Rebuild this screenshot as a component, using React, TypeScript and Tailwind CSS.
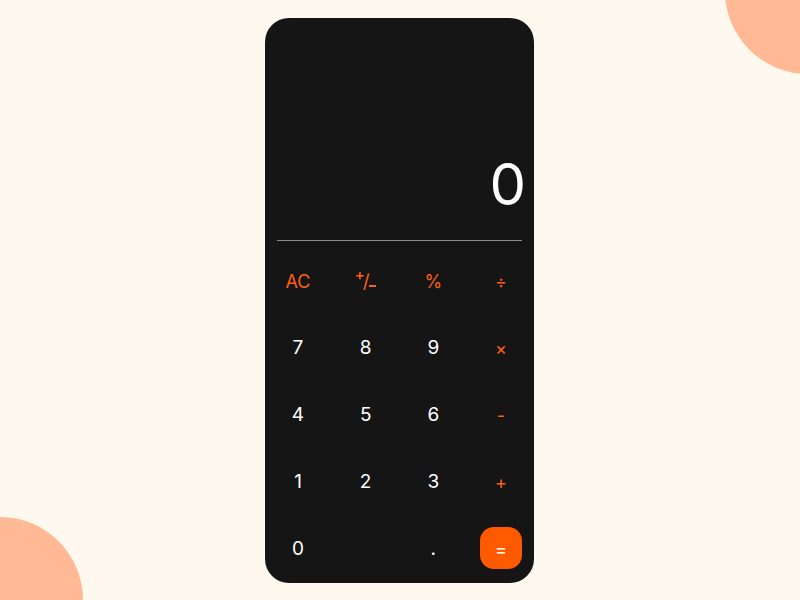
const keys: { label: string; kind: "op" | "num" | "eq" | "empty" }[] = [
  { label: "AC", kind: "op" },
  { label: "pm", kind: "op" },
  { label: "%", kind: "op" },
  { label: "÷", kind: "op" },
  { label: "7", kind: "num" },
  { label: "8", kind: "num" },
  { label: "9", kind: "num" },
  { label: "×", kind: "op" },
  { label: "4", kind: "num" },
  { label: "5", kind: "num" },
  { label: "6", kind: "num" },
  { label: "-", kind: "op" },
  { label: "1", kind: "num" },
  { label: "2", kind: "num" },
  { label: "3", kind: "num" },
  { label: "+", kind: "op" },
  { label: "0", kind: "num" },
  { label: "", kind: "empty" },
  { label: ".", kind: "num" },
  { label: "=", kind: "eq" },
];

// the +/- key: small plus up top, slash, small minus at the bottom
function PlusMinus() {
  return (
    <span className="relative inline-block h-[20px] w-[22px]">
      <span className="absolute left-0 top-[-4px] text-[15px] font-medium leading-none">+</span>
      <span className="absolute left-[8px] top-[1px] text-[19px] leading-none">/</span>
      <span className="absolute left-[14px] top-[14px] h-[2px] w-[7px] bg-[#ff6010]" />
    </span>
  );
}

function Key({ label, kind }: { label: string; kind: string }) {
  if (kind === "empty") return <div className="h-[42px] w-[42px]" />;
  if (kind === "eq") {
    return (
      <button className="flex h-[42px] w-[42px] items-center justify-center rounded-[14px] bg-[#ff5a00] pt-[2px] text-[18px] text-white">
        =
      </button>
    );
  }
  return (
    <button
      className={
        kind === "op"
          ? "flex h-[42px] w-[42px] items-center justify-center pt-[2px] text-[18px] text-[#ff6010]"
          : "flex h-[42px] w-[42px] items-center justify-center pt-[2px] text-[19px] text-white"
      }
    >
      {label === "pm" ? <PlusMinus /> : label}
    </button>
  );
}

export default function App() {
  return (
    <main
      className="relative flex h-[600px] w-full items-start justify-center overflow-hidden bg-[#fff8ee]"
      style={{ fontFamily: "Inter, 'Noto Sans', sans-serif" }}
    >
      <div className="absolute left-[725px] top-[-92px] h-[166px] w-[166px] rounded-full bg-[#ffb995]" />
      <div className="absolute left-[-83px] top-[517px] h-[166px] w-[166px] rounded-full bg-[#ffb995]" />

      <div className="relative mr-px mt-[18px] flex h-[565px] w-[269px] flex-col rounded-[24px] bg-[#151515] px-[12px] pb-[14px]">
        <div className="flex flex-1 items-end justify-end pb-[27px]">
          <span className="-mr-[4px] text-[58px] leading-none text-white">0</span>
        </div>
        <div className="h-px bg-[#8a8a8a]" />
        <div className="mt-[18px] grid grid-cols-[repeat(4,42px)] justify-between gap-y-[25px]">
          {keys.map((k, i) => (
            <Key key={i} label={k.label} kind={k.kind} />
          ))}
        </div>
      </div>
    </main>
  );
}
